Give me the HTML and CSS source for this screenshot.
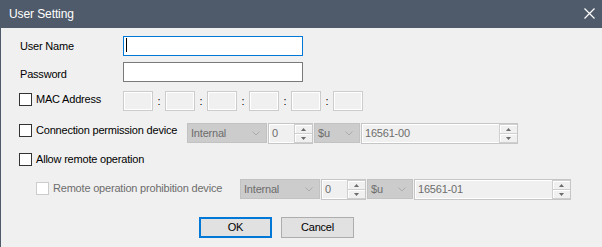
FILE: index.html
```html
<!DOCTYPE html>
<html>
<head>
<meta charset="utf-8">
<link rel="stylesheet" href="styles.css">
</head>
<body>
<div class="window">
  <div class="titlebar">
    <span class="title">User Setting</span>
    <svg class="close" width="11" height="11" viewBox="0 0 11 11"><path d="M0.5 0.5 L10.5 10.5 M10.5 0.5 L0.5 10.5" stroke="#ffffff" stroke-width="1.2" fill="none"/></svg>
  </div>
  <div class="content">
    <div class="row r-user">
      <span class="label lab-user">User Name</span>
      <div class="textbox focused"><span class="caret"></span></div>
    </div>
    <div class="row r-pass">
      <span class="label lab-pass">Password</span>
      <div class="textbox"></div>
    </div>
    <div class="row r-mac">
      <label class="check w-mac"><span class="box"></span><span class="ctext">MAC Address</span></label>
      <div class="macbox"></div><span class="colon">:</span>
      <div class="macbox"></div><span class="colon">:</span>
      <div class="macbox"></div><span class="colon">:</span>
      <div class="macbox"></div><span class="colon">:</span>
      <div class="macbox"></div><span class="colon">:</span>
      <div class="macbox"></div>
    </div>
    <div class="row r-conn">
      <label class="check w-conn"><span class="box"></span><span class="ctext">Connection permission device</span></label>
      <div class="combo w-int"><span>Internal</span><svg class="chev" width="8" height="5" viewBox="0 0 8 5"><path d="M0.5 0.5 L4 4 L7.5 0.5" stroke="#ababab" fill="none"/></svg></div>
      <div class="edit w-num"><span class="etext">0</span><div class="spin"><div class="sp up"><svg width="5" height="3" viewBox="0 0 5 3"><path d="M0 3 L2.5 0 L5 3 Z" fill="#6b6b6b"/></svg></div><div class="sp down"><svg width="5" height="3" viewBox="0 0 5 3"><path d="M0 0 L2.5 3 L5 0 Z" fill="#6b6b6b"/></svg></div></div></div>
      <div class="combo w-u"><span>$u</span><svg class="chev" width="8" height="5" viewBox="0 0 8 5"><path d="M0.5 0.5 L4 4 L7.5 0.5" stroke="#ababab" fill="none"/></svg></div>
      <div class="edit w-dev"><span class="etext">16561-00</span><div class="spin"><div class="sp up"><svg width="5" height="3" viewBox="0 0 5 3"><path d="M0 3 L2.5 0 L5 3 Z" fill="#6b6b6b"/></svg></div><div class="sp down"><svg width="5" height="3" viewBox="0 0 5 3"><path d="M0 0 L2.5 3 L5 0 Z" fill="#6b6b6b"/></svg></div></div></div>
    </div>
    <div class="row r-allow">
      <label class="check"><span class="box"></span><span class="ctext">Allow remote operation</span></label>
    </div>
    <div class="row r-remote">
      <label class="check disabled w-remote"><span class="box"></span><span class="ctext">Remote operation prohibition device</span></label>
      <div class="combo w-int"><span>Internal</span><svg class="chev" width="8" height="5" viewBox="0 0 8 5"><path d="M0.5 0.5 L4 4 L7.5 0.5" stroke="#ababab" fill="none"/></svg></div>
      <div class="edit w-num"><span class="etext">0</span><div class="spin"><div class="sp up"><svg width="5" height="3" viewBox="0 0 5 3"><path d="M0 3 L2.5 0 L5 3 Z" fill="#6b6b6b"/></svg></div><div class="sp down"><svg width="5" height="3" viewBox="0 0 5 3"><path d="M0 0 L2.5 3 L5 0 Z" fill="#6b6b6b"/></svg></div></div></div>
      <div class="combo w-u"><span>$u</span><svg class="chev" width="8" height="5" viewBox="0 0 8 5"><path d="M0.5 0.5 L4 4 L7.5 0.5" stroke="#ababab" fill="none"/></svg></div>
      <div class="edit w-dev"><span class="etext">16561-01</span><div class="spin"><div class="sp up"><svg width="5" height="3" viewBox="0 0 5 3"><path d="M0 3 L2.5 0 L5 3 Z" fill="#6b6b6b"/></svg></div><div class="sp down"><svg width="5" height="3" viewBox="0 0 5 3"><path d="M0 0 L2.5 3 L5 0 Z" fill="#6b6b6b"/></svg></div></div></div>
    </div>
    <div class="row r-buttons">
      <button class="btn default">OK</button>
      <button class="btn">Cancel</button>
    </div>
  </div>
</div>
</body>
</html>
```

FILE: styles.css
```css
* { box-sizing: border-box; }
html, body {
  margin: 0;
  padding: 0;
  width: 602px;
  height: 247px;
  overflow: hidden;
  background: #f0f0f0;
}
.window {
  width: 602px;
  height: 247px;
  font-family: "Liberation Sans", Arial, sans-serif;
  font-size: 11px;
  letter-spacing: -0.2px;
  color: #000;
}
.titlebar {
  height: 28px;
  background: #4f5b6a;
  color: #ffffff;
  display: flex;
  align-items: center;
  justify-content: space-between;
  padding: 0 7px 0 9px;
}
.title {
  font-size: 12px;
  letter-spacing: -0.1px;
  line-height: 14px;
}
.close { margin-top: -2px; }
.content {
  height: 219px;
  border-left: 1px solid #4f5b6a;
  padding-left: 18px;
  display: flex;
  flex-direction: column;
}
.row {
  display: flex;
  align-items: flex-start;
  flex: none;
}
.label { line-height: 13px; margin-left: 1px; width: 103px; }
.r-user { margin-top: 8px; height: 20px; }
.lab-user { margin-top: 4px; }
.r-pass { margin-top: 6px; height: 20px; }
.lab-pass { margin-top: 6px; }
.textbox {
  width: 180px;
  height: 20px;
  background: #ffffff;
  border: 1px solid #7a7a7a;
  position: relative;
}
.textbox.focused { border-color: #0078d7; }
.caret {
  position: absolute;
  left: 2px;
  top: 1px;
  width: 1px;
  height: 14px;
  background: #000;
}
.check {
  display: flex;
  align-items: flex-start;
  line-height: 13px;
}
.box {
  width: 13px;
  height: 13px;
  border: 1px solid #333333;
  background: #ffffff;
  margin-right: 4px;
  flex: none;
}
.check.disabled { padding-left: 17px; color: #6d6d6d; }
.check.disabled .box { border-color: #cccccc; }
.w-mac { width: 104px; margin-top: 2px; }
.r-mac { margin-top: 9px; height: 20px; }
.macbox {
  width: 30px;
  height: 20px;
  border: 1px solid #cccccc;
  box-shadow: inset 0 0 0 1px #ffffff;
  background: #f0f0f0;
}
.colon {
  width: 12px;
  text-align: center;
  line-height: 13px;
  margin-top: 4px;
}
.r-conn { margin-top: 12px; height: 21px; }
.w-conn { width: 168px; margin-top: 1px; }
.combo {
  height: 20px;
  background: #cccccc;
  border: 1px solid #c2c2c2;
  color: #6d6d6d;
  display: flex;
  align-items: center;
  justify-content: space-between;
  padding: 0 6px 0 3px;
  margin-right: 1px;
  line-height: 13px;
}
.combo span { margin-top: 1px; }
.w-int { width: 80px; }
.w-u { width: 46px; }
.edit {
  height: 21px;
  border: 1px solid #c6c6c6;
  box-shadow: inset 0 0 0 1px #ffffff;
  background: #f0f0f0;
  color: #6d6d6d;
  display: flex;
  align-items: stretch;
  margin-right: 1px;
}
.etext {
  flex: 1;
  padding-left: 3px;
  line-height: 13px;
  margin-top: 3px;
}
.w-num { width: 45px; }
.w-dev { width: 157px; }
.spin {
  width: 18px;
  display: flex;
  flex-direction: column;
  border: 1px solid #cfcfcf;
  border-right: none;
  background: #f0f0f0;
}
.sp {
  flex: 1;
  display: flex;
  align-items: center;
  justify-content: center;
  box-shadow: inset 1px 1px 0 #ffffff;
}
.sp.up { border-bottom: 1px solid #cfcfcf; }
.sp svg { display: block; }
.r-allow { margin-top: 9px; height: 13px; }
.r-remote { margin-top: 13px; height: 21px; }
.w-remote { width: 221px; margin-top: 3px; }
.r-buttons {
  margin-top: 17px;
  padding-left: 180px;
  gap: 9px;
}
.btn {
  width: 73px;
  height: 21px;
  background: #e1e1e1;
  border: 1px solid #adadad;
  font-family: "Liberation Sans", Arial, sans-serif;
  font-size: 11px;
  letter-spacing: -0.2px;
  color: #000;
  padding: 0;
  margin: 0;
  line-height: 13px;
}
.btn.default { border: 2px solid #0078d7; width: 73px; }
```
